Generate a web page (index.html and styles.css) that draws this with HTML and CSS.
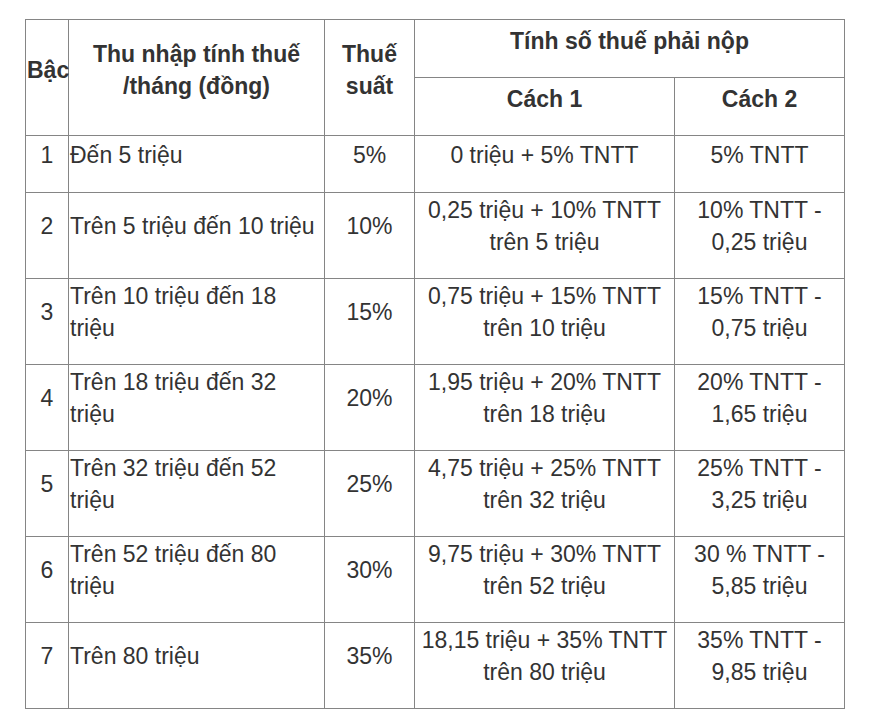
FILE: index.html
```html
<!DOCTYPE html>
<html lang="vi">
<head>
<meta charset="utf-8">
<title>Biểu thuế lũy tiến</title>
<link rel="stylesheet" href="styles.css">
</head>
<body>
<div class="wrap">
<table class="tax">
  <colgroup>
    <col class="c1"><col class="c2"><col class="c3"><col class="c4"><col class="c5">
  </colgroup>
  <thead>
    <tr class="h1">
      <th rowspan="2">Bậc</th>
      <th rowspan="2">Thu nhập tính thuế /tháng (đồng)</th>
      <th rowspan="2">Thuế suất</th>
      <th colspan="2">Tính số thuế phải nộp</th>
    </tr>
    <tr class="h2">
      <th>Cách 1</th>
      <th>Cách 2</th>
    </tr>
  </thead>
  <tbody>
    <tr class="r1">
      <td>1</td><td class="left">Đến 5 triệu</td><td>5%</td><td>0 triệu + 5% TNTT</td><td>5% TNTT</td>
    </tr>
    <tr class="r">
      <td>2</td><td class="left">Trên 5 triệu đến 10 triệu</td><td>10%</td><td>0,25 triệu + 10% TNTT trên 5 triệu</td><td>10% TNTT - 0,25 triệu</td>
    </tr>
    <tr class="r">
      <td>3</td><td class="left">Trên 10 triệu đến 18 triệu</td><td>15%</td><td>0,75 triệu + 15% TNTT trên 10 triệu</td><td>15% TNTT - 0,75 triệu</td>
    </tr>
    <tr class="r">
      <td>4</td><td class="left">Trên 18 triệu đến 32 triệu</td><td>20%</td><td>1,95 triệu + 20% TNTT trên 18 triệu</td><td>20% TNTT - 1,65 triệu</td>
    </tr>
    <tr class="r">
      <td>5</td><td class="left">Trên 32 triệu đến 52 triệu</td><td>25%</td><td>4,75 triệu + 25% TNTT trên 32 triệu</td><td>25% TNTT - 3,25 triệu</td>
    </tr>
    <tr class="r">
      <td>6</td><td class="left">Trên 52 triệu đến 80 triệu</td><td>30%</td><td>9,75 triệu + 30% TNTT trên 52 triệu</td><td>30 % TNTT - 5,85 triệu</td>
    </tr>
    <tr class="r">
      <td>7</td><td class="left">Trên 80 triệu</td><td>35%</td><td>18,15 triệu + 35% TNTT trên 80 triệu</td><td>35% TNTT - 9,85 triệu</td>
    </tr>
  </tbody>
</table>
</div>
</body>
</html>
```

FILE: styles.css
```css
html, body {
  margin: 0;
  padding: 0;
  background: #ffffff;
}

.wrap {
  padding: 19px 0 0 25px;
}

.tax {
  border-collapse: collapse;
  table-layout: fixed;
  width: 819px;
  font-family: "Liberation Sans", Arial, sans-serif;
  font-size: 23px;
  line-height: 32px;
  color: #333333;
}

.c1 { width: 43px; }
.c2 { width: 256px; }
.c3 { width: 90px; }
.c4 { width: 260px; }
.c5 { width: 170px; }

.tax th,
.tax td {
  border: 1px solid #858585;
  padding: 1px 1px 20px 1px;
  text-align: center;
  vertical-align: middle;
}

.tax th {
  font-weight: bold;
  padding: 3px 1px 18px 1px;
}

.tax td.left {
  text-align: left;
}

.h1 { height: 58px; }
.h2 { height: 58px; }
.r1 { height: 57px; }
.r { height: 86px; }
```
